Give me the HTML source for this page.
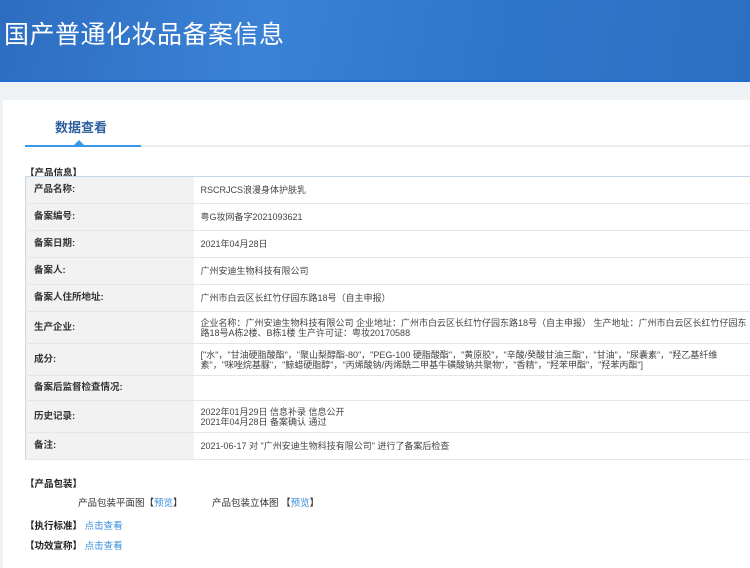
<!DOCTYPE html>
<html><head><meta charset="utf-8"><style>
*{margin:0;padding:0;box-sizing:border-box}
body{width:750px;height:568px;overflow:hidden;background:#eef2f5;font-family:"Liberation Sans","Noto Sans CJK SC",sans-serif;font-size:9.5px;color:#333;position:relative}
.hdr{position:absolute;left:0;top:0;width:750px;height:82px;background:linear-gradient(100deg,#2d6dc0 0%,#3a82d6 35%,#2f78cc 60%,#2c6fc2 100%);border-bottom:2px solid #1f6fd0}
.hdr h1{position:absolute;left:4px;top:15px;color:#fff;font-weight:normal;font-size:25px;letter-spacing:0.5px;font-family:"Noto Sans CJK SC",sans-serif}
.panel{position:absolute;left:3px;top:100px;width:747px;height:468px;background:#fff}
.tab{position:absolute;left:55px;top:117px;font-size:13px;font-weight:bold;color:#2c5f9e}
.ul1{position:absolute;left:25px;top:145px;width:116px;height:2px;background:#3b97e8}
.ul2{position:absolute;left:141px;top:145px;width:609px;height:2px;background:#ececec}
.tri{position:absolute;left:74px;top:140px;width:0;height:0;border-left:5px solid transparent;border-right:5px solid transparent;border-bottom:5px solid #3b97e8}
.sec{position:absolute;left:25px;font-weight:bold;font-size:9.5px;color:#222}
table{position:absolute;left:25px;top:176px;width:730px;border-collapse:collapse;border:1px solid #c8d6ea}
td{border-bottom:1px solid #e6e6e6;vertical-align:middle;line-height:10px}
td.l{width:168px;background:#f2f2f2;font-weight:bold;padding-left:8px;color:#333}
td.v{padding-left:7px;color:#444;font-size:9px}
a{color:#3a8fdc;text-decoration:none}
.t{position:absolute;font-size:9.5px}
</style></head><body>
<div class="hdr"><h1>国产普通化妆品备案信息</h1></div>
<div class="panel"></div>
<div class="tab">数据查看</div>
<div class="ul2"></div><div class="ul1"></div><div class="tri"></div>
<div class="sec" style="top:165px">【产品信息】</div>
<table>
<tr style="height:27px"><td class="l">产品名称:</td><td class="v">RSCRJCS浪漫身体护肤乳</td></tr>
<tr style="height:27px"><td class="l">备案编号:</td><td class="v">粤G妆网备字2021093621</td></tr>
<tr style="height:27px"><td class="l">备案日期:</td><td class="v">2021年04月28日</td></tr>
<tr style="height:27px"><td class="l">备案人:</td><td class="v">广州安迪生物科技有限公司</td></tr>
<tr style="height:27px"><td class="l">备案人住所地址:</td><td class="v">广州市白云区长红竹仔园东路18号（自主申报）</td></tr>
<tr style="height:32px"><td class="l">生产企业:</td><td class="v">企业名称：广州安迪生物科技有限公司 企业地址：广州市白云区长红竹仔园东路18号（自主申报） 生产地址：广州市白云区长红竹仔园东<br>路18号A栋2楼、B栋1楼 生产许可证：粤妆20170588</td></tr>
<tr style="height:32px"><td class="l">成分:</td><td class="v">["水"，"甘油硬脂酸酯"，"聚山梨醇酯-80"，"PEG-100 硬脂酸酯"，"黄原胶"，"辛酸/癸酸甘油三酯"，"甘油"，"尿囊素"，"羟乙基纤维<br>素"，"咪唑烷基脲"，"鲸蜡硬脂醇"，"丙烯酸钠/丙烯酰二甲基牛磺酸钠共聚物"，"香精"，"羟苯甲酯"，"羟苯丙酯"]</td></tr>
<tr style="height:25px"><td class="l">备案后监督检查情况:</td><td class="v"></td></tr>
<tr style="height:32px"><td class="l">历史记录:</td><td class="v">2022年01月29日 信息补录 信息公开<br>2021年04月28日 备案确认 通过</td></tr>
<tr style="height:27px"><td class="l">备注:</td><td class="v">2021-06-17 对 "广州安迪生物科技有限公司" 进行了备案后检查</td></tr>
</table>
<div class="sec" style="top:476px">【产品包装】</div>
<div class="t" style="left:78px;top:495px">产品包装平面图【<a>预览</a>】</div>
<div class="t" style="left:212px;top:495px">产品包装立体图 【<a>预览</a>】</div>
<div class="sec" style="top:518px">【执行标准】 <a style="font-weight:normal">点击查看</a></div>
<div class="sec" style="top:538px">【功效宣称】 <a style="font-weight:normal">点击查看</a></div>
</body></html>
